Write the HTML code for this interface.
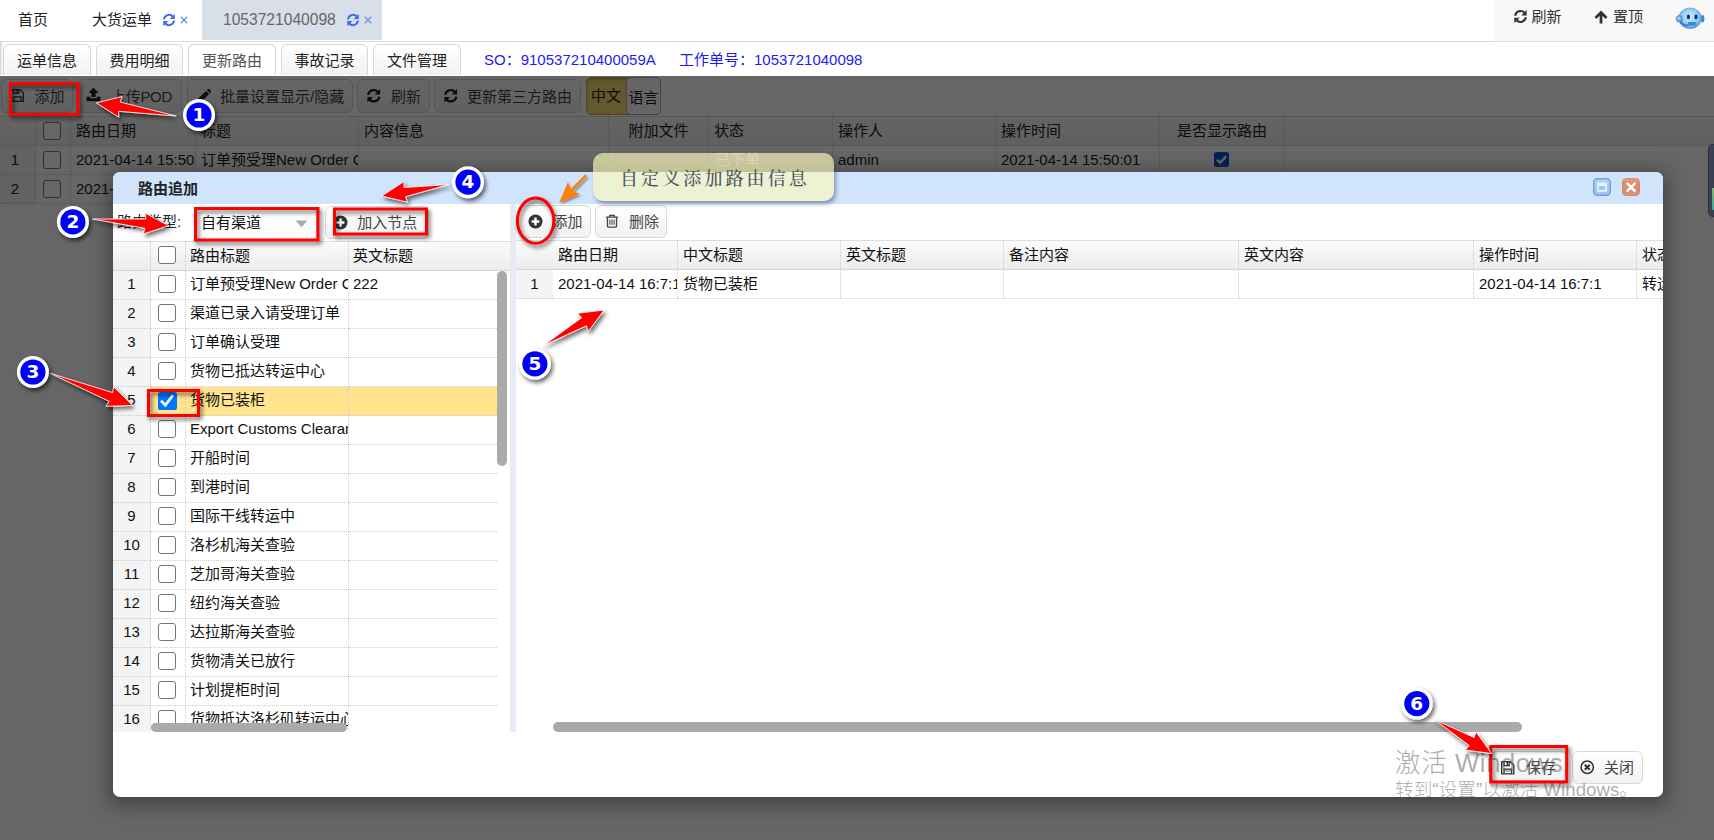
<!DOCTYPE html>
<html lang="zh-CN">
<head>
<meta charset="utf-8">
<title>路由追加</title>
<style>
*{box-sizing:border-box;margin:0;padding:0}
html,body{width:1714px;height:840px;overflow:hidden;background:#fff}
body{position:relative;font-family:"Liberation Sans","Noto Sans CJK SC",sans-serif;font-size:15px;color:#222;line-height:1}
.abs{position:absolute}
.t{position:absolute;white-space:nowrap;line-height:20px;height:20px}
/* top bar */
#topbar{left:0;top:0;width:1714px;height:42px;background:#fff;border-bottom:1px solid #dcdcdc}
#tabact{left:202px;top:0;width:180px;height:40px;background:#d9dfe8}
#topright{left:1495px;top:0;width:219px;height:41px;background:#f8f8f8}
/* sub tabs */
.stab{position:absolute;top:44px;height:31px;border:1px solid #d8d8d8;border-bottom:none;border-radius:6px 6px 0 0;background:linear-gradient(#fff,#f1f1f1);text-align:center;line-height:31px;font-size:15px;color:#222}
.stab.sel{background:#fff;color:#555}
/* underlying page */
#under{left:0;top:75px;width:1714px;height:765px;background:#fff}
.ubtn{position:absolute;top:4px;height:34px;border:1px solid #d4d4d4;border-radius:6px;background:linear-gradient(#fff,#f0f0f0);font-size:15px;line-height:34px;color:#444;white-space:nowrap}
.uh{position:absolute;top:41px;height:30px;line-height:29px;font-size:15px;border-right:1px dotted #ccc;padding-left:5px;white-space:nowrap;overflow:hidden}
.uc{position:absolute;height:29px;line-height:28px;font-size:15px;border-right:1px dotted #ccc;border-bottom:1px dotted #ccc;padding-left:5px;white-space:nowrap;overflow:hidden}
.cb{position:absolute;width:18px;height:18px;border:1px solid #767676;border-radius:3px;background:#fff}
#mask{left:0;top:76px;width:1714px;height:764px;background:rgba(0,0,0,.6)}
/* window */
#win{left:113px;top:172px;width:1550px;height:625px;background:#fff;border-radius:7px;box-shadow:0 4px 19px 4px rgba(0,0,0,.36);overflow:hidden}
#wtitle{left:0;top:0;width:1550px;height:32px;background:#d0e4fc}
.gh{position:absolute;height:30px;line-height:29px;font-size:15px;border-right:1px dotted #ccc;padding-left:5px;white-space:nowrap;overflow:hidden;color:#111}
.gc{position:absolute;height:29px;line-height:26px;font-size:15px;border-right:1px dotted #ccc;border-bottom:1px dotted #ccc;padding-left:5px;white-space:nowrap;overflow:hidden;color:#111}
.rg{line-height:28px}
.lg{padding-left:4px}
.rn{background:#f4f4f4;text-align:center;padding-left:0}
.wbtn{position:absolute;height:33px;border:1px solid #d8d8d8;border-radius:6px;background:linear-gradient(#fff,#f1f1f1);font-size:15px;line-height:31px;color:#444;white-space:nowrap}
</style>
</head>
<body>
<!-- TOPBAR -->
<div class="abs" id="topbar"></div>
<div class="abs" id="tabact"></div>
<div class="abs" id="topright"></div>
<div class="t" style="left:18px;top:10px;font-size:15px;color:#222">首页</div>
<div class="t" style="left:92px;top:10px;font-size:15px;color:#222">大货运单</div>
<div class="t" style="left:223px;top:10px;font-size:15.6px;color:#666">1053721040098</div>
<div class="t" style="left:1531.5px;top:7px;font-size:15px;color:#333">刷新</div>
<div class="t" style="left:1613px;top:7px;font-size:15px;color:#333">置顶</div>
<!--ICTOP-S--><svg class="abs" style="left:162px;top:13px" width="14" height="14" viewBox="0 0 16 16" ><g fill="none" stroke="#3a6af0" stroke-width="2.3"><path d="M2.3 7.2A5.8 5.8 0 0 1 12.3 4"/><path d="M13.7 8.8A5.8 5.8 0 0 1 3.7 12"/></g><path d="M14.6 1v5.8H8.8z" fill="#3a6af0"/><path d="M1.4 15V9.2h5.8z" fill="#3a6af0"/></svg>
<svg class="abs" style="left:180px;top:15.5px" width="8" height="8" viewBox="0 0 10 10" ><path d="M1 1l8 8M9 1l-8 8" stroke="#6b9ce8" stroke-width="1.8"/></svg>
<svg class="abs" style="left:346px;top:13px" width="14" height="14" viewBox="0 0 16 16" ><g fill="none" stroke="#3a6af0" stroke-width="2.3"><path d="M2.3 7.2A5.8 5.8 0 0 1 12.3 4"/><path d="M13.7 8.8A5.8 5.8 0 0 1 3.7 12"/></g><path d="M14.6 1v5.8H8.8z" fill="#3a6af0"/><path d="M1.4 15V9.2h5.8z" fill="#3a6af0"/></svg>
<svg class="abs" style="left:363.5px;top:15.5px" width="8" height="8" viewBox="0 0 10 10" ><path d="M1 1l8 8M9 1l-8 8" stroke="#6b9ce8" stroke-width="1.8"/></svg>
<svg class="abs" style="left:1512.5px;top:9px" width="15" height="15" viewBox="0 0 16 16" ><g fill="none" stroke="#333" stroke-width="2.3"><path d="M2.3 7.2A5.8 5.8 0 0 1 12.3 4"/><path d="M13.7 8.8A5.8 5.8 0 0 1 3.7 12"/></g><path d="M14.6 1v5.8H8.8z" fill="#333"/><path d="M1.4 15V9.2h5.8z" fill="#333"/></svg>
<svg class="abs" style="left:1594px;top:9.5px" width="14" height="14" viewBox="0 0 16 16" ><path d="M8 .6L.6 8 2.8 10.2 6.4 6.6V15.4H9.6V6.6L13.2 10.2 15.4 8z" fill="#333"/></svg>
<svg class="abs" style="left:1675px;top:7px" width="30" height="23" viewBox="0 0 30 23" ><defs><radialGradient id="av" cx=".5" cy=".42" r=".62"><stop offset="0" stop-color="#d0f1f8"/><stop offset=".55" stop-color="#8fd0ee"/><stop offset="1" stop-color="#3f8fdc"/></radialGradient><radialGradient id="av2" cx=".45" cy=".4" r=".7"><stop offset="0" stop-color="#a8dcf4"/><stop offset="1" stop-color="#3a80d4"/></radialGradient></defs><ellipse cx="27.6" cy="11.8" rx="1.8" ry="3.8" fill="#3f86d6"/><ellipse cx="15.1" cy="11.3" rx="11.4" ry="10.4" fill="url(#av)" stroke="#4a7fd0" stroke-width=".5"/><circle cx="4.2" cy="11.8" r="3.2" fill="url(#av2)" stroke="#3f74cc" stroke-width=".5"/><ellipse cx="13.4" cy="9.9" rx="1.6" ry="2.3" fill="#1d1fa0"/><ellipse cx="21" cy="9.9" rx="1.6" ry="2.3" fill="#1d1fa0"/><path d="M5.2 14.6Q8 18.6 13.4 18.4" fill="none" stroke="#2f62c0" stroke-width="1.3"/><rect x="13.1" y="14.9" width="7.6" height="3.7" rx=".8" fill="#3a86cf"/></svg><!--ICTOP-E-->
<!-- SUBTABS -->
<div class="abs" style="left:0;top:75px;width:1714px;height:1px;background:#dcdcdc"></div>
<div class="abs" style="left:0;top:42px;width:3px;height:33px;background:linear-gradient(to right,#d4d4d4,#fff)"></div>
<div class="stab" style="left:3px;width:88px">运单信息</div>
<div class="stab" style="left:96px;width:87px">费用明细</div>
<div class="stab sel" style="left:188px;width:88px">更新路由</div>
<div class="stab" style="left:281px;width:87px">事故记录</div>
<div class="stab" style="left:373px;width:88px">文件管理</div>
<div class="t" style="left:484px;top:50px;color:#1c1cf0">SO：910537210400059A</div>
<div class="t" style="left:679px;top:50px;color:#1c1cf0">工作单号：1053721040098</div>
<!-- UNDER -->
<div class="abs" id="under">
  <!-- toolbar buttons -->
  <div class="ubtn" style="left:1px;width:72px"><span class="abs" style="left:32.5px">添加</span></div>
  <div class="ubtn" style="left:78px;width:104px"><span class="abs" style="left:32px;letter-spacing:-.3px">上传POD</span></div>
  <div class="ubtn" style="left:187px;width:166px"><span class="abs" style="left:32px">批量设置显示/隐藏</span></div>
  <div class="ubtn" style="left:357px;width:73px"><span class="abs" style="left:33px">刷新</span></div>
  <div class="ubtn" style="left:434px;width:147px"><span class="abs" style="left:32px">更新第三方路由</span></div>
  <div class="abs" style="left:586px;top:2px;width:75px;height:38px;border-radius:5px;background:#ffdc70;border:1px solid #c8aa50;box-shadow:inset 0 2px 2px rgba(0,0,0,.22)"></div>
  <div class="abs" style="left:626px;top:2px;width:35px;height:38px;border-radius:5px;background:#fcfcfc;border:1px solid #aaa"></div>
  <div class="t" style="left:591px;top:11px;color:#222">中文</div>
  <div class="t" style="left:628.5px;top:13px;color:#222">语言</div>
<!--ICUND-S--><svg class="abs" style="left:11px;top:14px" width="13" height="13" viewBox="0 0 16 16" ><path d="M.8 .8h10.2l4.2 4.2v10.2H.8z" fill="none" stroke="#333" stroke-width="1.6" stroke-linejoin="round"/><path d="M3.6 1v4.4h6.2V1" fill="none" stroke="#333" stroke-width="1.5"/><rect x="6.6" y="1.2" width="2" height="3.4" fill="#333"/><path d="M3.6 15V9.6h8.8V15" fill="none" stroke="#333" stroke-width="1.5"/></svg>
<svg class="abs" style="left:86px;top:12.3px" width="15" height="15" viewBox="0 0 16 16" ><path d="M8 .6L13.4 6.4H10.3V10.6H5.7V6.4H2.6z" fill="#222"/><path d="M.6 10.4H4.6V12H11.4V10.4H15.4V15.2H.6z" fill="#222"/></svg>
<svg class="abs" style="left:195.5px;top:13.5px" width="15" height="15" viewBox="0 0 16 16" ><path d="M1 15l.9-4.3L10.6 2l3.4 3.4-8.7 8.7z" fill="#222"/><path d="M11.6 1l1-1a1 1 0 0 1 1.4 0l2 2a1 1 0 0 1 0 1.4l-1 1z" fill="#222"/></svg>
<svg class="abs" style="left:366px;top:12.5px" width="15.5" height="15.5" viewBox="0 0 16 16" ><g fill="none" stroke="#222" stroke-width="2.3"><path d="M2.3 7.2A5.8 5.8 0 0 1 12.3 4"/><path d="M13.7 8.8A5.8 5.8 0 0 1 3.7 12"/></g><path d="M14.6 1v5.8H8.8z" fill="#222"/><path d="M1.4 15V9.2h5.8z" fill="#222"/></svg>
<svg class="abs" style="left:442.5px;top:12.5px" width="15.5" height="15.5" viewBox="0 0 16 16" ><g fill="none" stroke="#222" stroke-width="2.3"><path d="M2.3 7.2A5.8 5.8 0 0 1 12.3 4"/><path d="M13.7 8.8A5.8 5.8 0 0 1 3.7 12"/></g><path d="M14.6 1v5.8H8.8z" fill="#222"/><path d="M1.4 15V9.2h5.8z" fill="#222"/></svg><!--ICUND-E-->
  <!-- grid header -->
  <div class="abs" style="left:0;top:41px;width:1714px;height:30px;background:linear-gradient(#fafafa,#efefef);border-top:1px solid #ddd;border-bottom:1px solid #ddd"></div>
  <div class="uh" style="left:0;width:36px"></div>
  <div class="uh" style="left:36px;width:35px"></div>
  <div class="uh" style="left:71px;width:125px">路由日期</div>
  <div class="uh" style="left:196px;width:163px">标题</div>
  <div class="uh" style="left:359px;width:250px">内容信息</div>
  <div class="uh" style="left:609px;width:100px;text-align:center;padding-left:0">附加文件</div>
  <div class="uh" style="left:709px;width:124px">状态</div>
  <div class="uh" style="left:833px;width:163px">操作人</div>
  <div class="uh" style="left:996px;width:164px">操作时间</div>
  <div class="uh" style="left:1160px;width:125px;text-align:center;padding-left:0">是否显示路由</div>
  <div class="cb" style="left:43px;top:47px"></div>
  <!-- row 1 -->
  <div class="uc rn" style="left:0;top:71px;width:36px;padding-right:5px">1</div>
  <div class="uc" style="left:36px;top:71px;width:35px"></div>
  <div class="uc" style="left:71px;top:71px;width:125px">2021-04-14 15:50:01</div>
  <div class="uc" style="left:196px;top:71px;width:163px">订单预受理New Order Create</div>
  <div class="uc" style="left:359px;top:71px;width:250px"></div>
  <div class="uc" style="left:609px;top:71px;width:100px"></div>
  <div class="uc" style="left:709px;top:71px;width:124px"></div>
  <div class="uc" style="left:833px;top:71px;width:163px">admin</div>
  <div class="uc" style="left:996px;top:71px;width:164px">2021-04-14 15:50:01</div>
  <div class="uc" style="left:1160px;top:71px;width:125px"></div>
  <div class="cb" style="left:43px;top:76px"></div>
  <svg class="abs" style="left:1214px;top:77px" width="15" height="15" viewBox="0 0 15 15"><rect x="0" y="0" width="15" height="15" rx="2.5" fill="#0b57cf"/><path d="M3 7.6l3.2 3.2 5.8-6.4" fill="none" stroke="#fff" stroke-width="2.4"/></svg>
  <!-- row 2 -->
  <div class="uc rn" style="left:0;top:100px;width:36px;padding-right:5px">2</div>
  <div class="uc" style="left:36px;top:100px;width:35px"></div>
  <div class="uc" style="left:71px;top:100px;width:125px">2021-04-14 15:50:01</div>
  <div class="uc" style="left:196px;top:100px;width:1089px"></div>
  <div class="cb" style="left:43px;top:105px"></div>
</div>
<div class="abs" id="mask"></div>
<div class="t" style="left:715px;top:150px;color:rgba(255,255,255,.36)">已下单</div>
<!-- WINDOW -->
<div class="abs" id="win">
  <div class="abs" id="wtitle"></div>
  <div class="t" style="left:25px;top:7px;font-weight:bold;color:#222">路由追加</div>
  <!-- LEFT PANEL -->
  <div class="abs" id="lp" style="left:0;top:32px;width:397px;height:528px;overflow:hidden">
    <div class="t" style="left:4px;top:8px;color:#222">路由类型:</div>
    <div class="abs" style="left:83px;top:4px;width:121px;height:32px;border:1px solid #ccc;border-radius:5px;background:#fff"></div>
    <div class="t" style="left:88px;top:9px;color:#111">自有渠道</div>
    <svg class="abs" style="left:182px;top:16px" width="13" height="8" viewBox="0 0 13 8"><path d="M0.5 0.5h12L6.5 7.2z" fill="#aaa"/></svg>
    <div class="wbtn" style="left:212px;top:2px;width:104px"><span class="abs" style="left:31.3px">加入节点</span></div>
    <svg class="abs" style="left:220px;top:11px" width="15" height="15" viewBox="0 0 15 15"><circle cx="7.5" cy="7.5" r="7" fill="#333"/><path d="M7.5 3.6v7.8M3.6 7.5h7.8" stroke="#fff" stroke-width="2.4"/></svg>
    <!-- header -->
    <div class="abs" style="left:0;top:37px;width:397px;height:30px;background:linear-gradient(#fbfbfb,#ececec);border-top:1px solid #ddd;border-bottom:1px solid #d6d6d6"></div>
    <div class="gh lg" style="left:0;top:37px;width:38px"></div>
    <div class="gh lg" style="left:38px;top:37px;width:35px"></div>
    <div class="gh lg" style="left:73px;top:37px;width:163px">路由标题</div>
    <div class="gh lg" style="left:236px;top:37px;width:161px;border-right:none">英文标题</div>
    <div class="cb" style="left:45px;top:42px"></div>
    <div class="gc rn" style="left:0;top:67px;width:38px">1</div>
    <div class="gc lg" style="left:38px;top:67px;width:35px"></div>
    <div class="gc lg" style="left:73px;top:67px;width:163px">订单预受理New Order Create</div>
    <div class="gc lg" style="left:236px;top:67px;width:148px;border-right:none">222</div>
    <div class="cb" style="left:45px;top:71px"></div>
    <div class="gc rn" style="left:0;top:96px;width:38px">2</div>
    <div class="gc lg" style="left:38px;top:96px;width:35px"></div>
    <div class="gc lg" style="left:73px;top:96px;width:163px">渠道已录入请受理订单</div>
    <div class="gc lg" style="left:236px;top:96px;width:148px;border-right:none"></div>
    <div class="cb" style="left:45px;top:100px"></div>
    <div class="gc rn" style="left:0;top:125px;width:38px">3</div>
    <div class="gc lg" style="left:38px;top:125px;width:35px"></div>
    <div class="gc lg" style="left:73px;top:125px;width:163px">订单确认受理</div>
    <div class="gc lg" style="left:236px;top:125px;width:148px;border-right:none"></div>
    <div class="cb" style="left:45px;top:129px"></div>
    <div class="gc rn" style="left:0;top:154px;width:38px">4</div>
    <div class="gc lg" style="left:38px;top:154px;width:35px"></div>
    <div class="gc lg" style="left:73px;top:154px;width:163px">货物已抵达转运中心</div>
    <div class="gc lg" style="left:236px;top:154px;width:148px;border-right:none"></div>
    <div class="cb" style="left:45px;top:158px"></div>
    <div class="gc rn" style="left:0;top:183px;width:38px">5</div>
    <div class="gc lg" style="left:38px;top:183px;width:35px;background:#ffe48d"></div>
    <div class="gc lg" style="left:73px;top:183px;width:163px;background:#ffe48d">货物已装柜</div>
    <div class="gc lg" style="left:236px;top:183px;width:148px;border-right:none;background:#ffe48d"></div>
    <svg class="abs" style="left:45px;top:188px" width="19" height="18" viewBox="0 0 19 18"><rect width="19" height="18" rx="2.6" fill="#0075ff"/><path d="M3 8.8l4.4 4.3L14.9 3.2" fill="none" stroke="#fff" stroke-width="2.7"/></svg>
    <div class="gc rn" style="left:0;top:212px;width:38px">6</div>
    <div class="gc lg" style="left:38px;top:212px;width:35px"></div>
    <div class="gc lg" style="left:73px;top:212px;width:163px">Export Customs Clearance</div>
    <div class="gc lg" style="left:236px;top:212px;width:148px;border-right:none"></div>
    <div class="cb" style="left:45px;top:216px"></div>
    <div class="gc rn" style="left:0;top:241px;width:38px">7</div>
    <div class="gc lg" style="left:38px;top:241px;width:35px"></div>
    <div class="gc lg" style="left:73px;top:241px;width:163px">开船时间</div>
    <div class="gc lg" style="left:236px;top:241px;width:148px;border-right:none"></div>
    <div class="cb" style="left:45px;top:245px"></div>
    <div class="gc rn" style="left:0;top:270px;width:38px">8</div>
    <div class="gc lg" style="left:38px;top:270px;width:35px"></div>
    <div class="gc lg" style="left:73px;top:270px;width:163px">到港时间</div>
    <div class="gc lg" style="left:236px;top:270px;width:148px;border-right:none"></div>
    <div class="cb" style="left:45px;top:274px"></div>
    <div class="gc rn" style="left:0;top:299px;width:38px">9</div>
    <div class="gc lg" style="left:38px;top:299px;width:35px"></div>
    <div class="gc lg" style="left:73px;top:299px;width:163px">国际干线转运中</div>
    <div class="gc lg" style="left:236px;top:299px;width:148px;border-right:none"></div>
    <div class="cb" style="left:45px;top:303px"></div>
    <div class="gc rn" style="left:0;top:328px;width:38px">10</div>
    <div class="gc lg" style="left:38px;top:328px;width:35px"></div>
    <div class="gc lg" style="left:73px;top:328px;width:163px">洛杉机海关查验</div>
    <div class="gc lg" style="left:236px;top:328px;width:148px;border-right:none"></div>
    <div class="cb" style="left:45px;top:332px"></div>
    <div class="gc rn" style="left:0;top:357px;width:38px">11</div>
    <div class="gc lg" style="left:38px;top:357px;width:35px"></div>
    <div class="gc lg" style="left:73px;top:357px;width:163px">芝加哥海关查验</div>
    <div class="gc lg" style="left:236px;top:357px;width:148px;border-right:none"></div>
    <div class="cb" style="left:45px;top:361px"></div>
    <div class="gc rn" style="left:0;top:386px;width:38px">12</div>
    <div class="gc lg" style="left:38px;top:386px;width:35px"></div>
    <div class="gc lg" style="left:73px;top:386px;width:163px">纽约海关查验</div>
    <div class="gc lg" style="left:236px;top:386px;width:148px;border-right:none"></div>
    <div class="cb" style="left:45px;top:390px"></div>
    <div class="gc rn" style="left:0;top:415px;width:38px">13</div>
    <div class="gc lg" style="left:38px;top:415px;width:35px"></div>
    <div class="gc lg" style="left:73px;top:415px;width:163px">达拉斯海关查验</div>
    <div class="gc lg" style="left:236px;top:415px;width:148px;border-right:none"></div>
    <div class="cb" style="left:45px;top:419px"></div>
    <div class="gc rn" style="left:0;top:444px;width:38px">14</div>
    <div class="gc lg" style="left:38px;top:444px;width:35px"></div>
    <div class="gc lg" style="left:73px;top:444px;width:163px">货物清关已放行</div>
    <div class="gc lg" style="left:236px;top:444px;width:148px;border-right:none"></div>
    <div class="cb" style="left:45px;top:448px"></div>
    <div class="gc rn" style="left:0;top:473px;width:38px">15</div>
    <div class="gc lg" style="left:38px;top:473px;width:35px"></div>
    <div class="gc lg" style="left:73px;top:473px;width:163px">计划提柜时间</div>
    <div class="gc lg" style="left:236px;top:473px;width:148px;border-right:none"></div>
    <div class="cb" style="left:45px;top:477px"></div>
    <div class="gc rn" style="left:0;top:502px;width:38px">16</div>
    <div class="gc lg" style="left:38px;top:502px;width:35px"></div>
    <div class="gc lg" style="left:73px;top:502px;width:163px">货物抵达洛杉矶转运中心</div>
    <div class="gc lg" style="left:236px;top:502px;width:148px;border-right:none"></div>
    <div class="cb" style="left:45px;top:506px"></div>
    <div class="abs" style="left:384px;top:67px;width:13px;height:461px;background:#fff"></div>
    <div class="abs" style="left:384px;top:67px;width:10px;height:195px;background:#aaa;border-radius:5px"></div>
    <div class="abs" style="left:38px;top:519px;width:196px;height:9px;background:#aaa;border-radius:5px"></div>
  </div>
  <div class="abs" style="left:397px;top:32px;width:6px;height:528px;background:#e6ecf7"></div>
  <!-- RIGHT PANEL -->
  <div class="abs" id="rp" style="left:403px;top:32px;width:1147px;height:528px;overflow:hidden">
    <div class="wbtn" style="left:2px;top:1px;width:73px"><span class="abs" style="left:33.5px">添加</span></div>
    <svg class="abs" style="left:12px;top:10px" width="15" height="15" viewBox="0 0 15 15"><circle cx="7.5" cy="7.5" r="7" fill="#333"/><path d="M7.5 3.6v7.8M3.6 7.5h7.8" stroke="#fff" stroke-width="2.4"/></svg>
    <div class="wbtn" style="left:79px;top:1px;width:72px"><span class="abs" style="left:33px">删除</span></div>
    <div class="abs" style="left:0;top:36px;width:1147px;height:30px;background:linear-gradient(#fbfbfb,#ececec);border-top:1px solid #ddd;border-bottom:1px solid #d6d6d6"></div>
    <div class="gh" style="left:0;top:36px;width:37px;border-right:none"></div>
    <div class="gh" style="left:37px;top:36px;width:125px">路由日期</div>
    <div class="gh" style="left:162px;top:36px;width:163px">中文标题</div>
    <div class="gh" style="left:325px;top:36px;width:163px">英文标题</div>
    <div class="gh" style="left:488px;top:36px;width:235px">备注内容</div>
    <div class="gh" style="left:723px;top:36px;width:235px">英文内容</div>
    <div class="gh" style="left:958px;top:36px;width:163px">操作时间</div>
    <div class="gh" style="left:1121px;top:36px;width:60px;border-right:none">状态</div>
    <div class="gc rn rg" style="left:0;top:66px;width:37px;border-right:none">1</div>
    <div class="gc rg" style="left:37px;top:66px;width:125px">2021-04-14 16:7:11</div>
    <div class="gc rg" style="left:162px;top:66px;width:163px">货物已装柜</div>
    <div class="gc rg" style="left:325px;top:66px;width:163px"></div>
    <div class="gc rg" style="left:488px;top:66px;width:235px"></div>
    <div class="gc rg" style="left:723px;top:66px;width:235px"></div>
    <div class="gc rg" style="left:958px;top:66px;width:163px">2021-04-14 16:7:1</div>
    <div class="gc rg" style="left:1121px;top:66px;width:60px;border-right:none">转运中</div>
    <div class="abs" style="left:37px;top:518px;width:969px;height:10px;background:#aaa;border-radius:5px"></div>
  </div>
  <!-- title buttons -->
  <svg class="abs" style="left:1480px;top:6px" width="18" height="18" viewBox="0 0 18 18"><defs><linearGradient id="mb" x1="0" y1="0" x2="0" y2="1"><stop offset="0" stop-color="#b4d3fb"/><stop offset="1" stop-color="#a0c2f0"/></linearGradient></defs><rect x=".7" y=".7" width="16.6" height="16.6" rx="3.6" fill="url(#mb)" stroke="#6f9fdd" stroke-width="1.4"/><rect x="4.2" y="4.5" width="9.6" height="9.3" fill="#eaf1fd"/><rect x="6" y="8.1" width="6" height="3.8" fill="#9cc2f5"/></svg>
  <svg class="abs" style="left:1509px;top:6px" width="18" height="18" viewBox="0 0 18 18"><defs><linearGradient id="cb2" x1="0" y1="0" x2="0" y2="1"><stop offset="0" stop-color="#e7a57c"/><stop offset=".25" stop-color="#e28c6c"/><stop offset=".8" stop-color="#dc8a6e"/><stop offset="1" stop-color="#c9a07a"/></linearGradient></defs><rect x=".5" y=".5" width="17" height="17" rx="3.8" fill="url(#cb2)" stroke="#cc7a62" stroke-width=".8"/><path d="M5.5 5.6l7.2 7.2M12.7 5.6l-7.2 7.2" stroke="#fff" stroke-width="2.5" stroke-linecap="round"/></svg>
  <!-- bottom buttons -->
  <div class="wbtn" style="left:1378px;top:579px;width:76px"><span class="abs" style="left:34px">保存</span></div>
  <div class="wbtn" style="left:1459px;top:579px;width:71px"><span class="abs" style="left:31px">关闭</span></div>
  <!--ICWIN-S--><svg class="abs" style="left:491.5px;top:42px" width="14" height="14" viewBox="0 0 16 16" ><path d="M1 3.6h14" stroke="#444" stroke-width="1.5"/><path d="M5.4 3.4V1.6h5.2v1.8" fill="none" stroke="#444" stroke-width="1.4"/><path d="M2.8 4v9.6a1.4 1.4 0 0 0 1.4 1.4h7.6a1.4 1.4 0 0 0 1.4-1.4V4" fill="none" stroke="#444" stroke-width="1.5"/><path d="M5.6 6.4v6M8 6.4v6M10.4 6.4v6" stroke="#444" stroke-width="1.2"/></svg>
<svg class="abs" style="left:1388px;top:589px" width="13.5" height="13.5" viewBox="0 0 16 16" ><path d="M.8 .8h10.2l4.2 4.2v10.2H.8z" fill="none" stroke="#333" stroke-width="1.6" stroke-linejoin="round"/><path d="M3.6 1v4.4h6.2V1" fill="none" stroke="#333" stroke-width="1.5"/><rect x="6.6" y="1.2" width="2" height="3.4" fill="#333"/><path d="M3.6 15V9.6h8.8V15" fill="none" stroke="#333" stroke-width="1.5"/></svg>
<svg class="abs" style="left:1467px;top:588px" width="14.5" height="14.5" viewBox="0 0 16 16" ><circle cx="8" cy="8" r="6.8" fill="none" stroke="#333" stroke-width="1.7"/><path d="M5.3 5.3l5.4 5.4M10.7 5.3l-5.4 5.4" stroke="#333" stroke-width="2.3"/></svg><!--ICWIN-E-->
</div>
<!-- TOOLTIP / WATERMARK -->
<div class="abs" style="left:1708px;top:144px;width:8px;height:73px;background:#3a4054;border-radius:5px 0 0 5px;border:1px solid #2b3040"></div>
<div class="abs" style="left:1712px;top:188px;width:2px;height:22px;background:linear-gradient(#86b566,#3aa898)"></div>
<div class="abs" style="left:593px;top:153px;width:241px;height:48px;border-radius:10px;background:rgba(252,250,188,.66);box-shadow:2px 3px 4px rgba(40,50,90,.45)"></div>
<div class="t" style="left:620px;top:165px;height:24px;line-height:24px;font-family:'Noto Serif CJK SC','Liberation Serif',serif;font-size:18px;letter-spacing:3.1px;color:#4f5662;font-weight:500">自定义添加路由信息</div>
<div class="abs" style="left:113px;top:172px;width:1550px;height:625px;overflow:hidden;border-radius:7px">
  <div class="t" style="left:1282px;top:576px;height:30px;line-height:30px;font-size:25.6px;color:rgba(90,90,90,.5);letter-spacing:.6px;font-weight:300">激活 Windows</div>
  <div class="t" style="left:1282px;top:606px;height:24px;line-height:24px;font-size:18.7px;color:rgba(90,90,90,.5);font-weight:300">转到“设置”以激活 Windows。</div>
</div>
<!--ANNOT-START-->
<svg class="abs" style="left:0;top:0;pointer-events:none" width="1714" height="840" viewBox="0 0 1714 840">
<defs><filter id="sh" x="-30%" y="-30%" width="160%" height="160%"><feDropShadow dx="2" dy="2.8" stdDeviation="2.1" flood-color="#000" flood-opacity=".6"/></filter><filter id="sh2" x="-30%" y="-30%" width="160%" height="160%"><feDropShadow dx="1.5" dy="2" stdDeviation="1.2" flood-color="#000" flood-opacity=".4"/></filter></defs>
<rect x="10.5" y="83.5" width="67.2" height="31" fill="none" stroke="#ff0000" stroke-width="3" filter="url(#sh)"/>
<rect x="195.5" y="208.5" width="122.5" height="31.5" fill="none" stroke="#ff0000" stroke-width="3" filter="url(#sh)"/>
<rect x="334.5" y="209.0" width="92" height="25.0" fill="none" stroke="#ff0000" stroke-width="3" filter="url(#sh)"/>
<rect x="148.5" y="390.5" width="50" height="25" fill="none" stroke="#ff0000" stroke-width="3" filter="url(#sh)"/>
<rect x="1490.8" y="746.5" width="75.90000000000009" height="35.39999999999998" fill="none" stroke="#ff0000" stroke-width="3" filter="url(#sh)"/>
<ellipse cx="535.6" cy="220.7" rx="18.2" ry="22.6" fill="none" stroke="#ff0000" stroke-width="3" filter="url(#sh)"/>
<polygon points="176.2,116.0 120.1,102.0 122.2,96.5 96.3,102.9 118.8,117.2 118.5,111.3" fill="#ff0000" stroke="#fff" stroke-width="0.8" stroke-linejoin="round" filter="url(#sh)"/>
<polygon points="92.4,219.0 145.0,228.3 143.3,234.0 168.6,225.7 145.1,213.1 145.8,219.0" fill="#ff0000" stroke="#fff" stroke-width="0.8" stroke-linejoin="round" filter="url(#sh)"/>
<polygon points="49.9,373.2 109.2,401.3 106.0,406.3 132.6,405.4 113.6,386.7 112.6,392.6" fill="#ff0000" stroke="#fff" stroke-width="0.8" stroke-linejoin="round" filter="url(#sh)"/>
<polygon points="448.7,184.6 403.9,187.5 404.1,181.5 381.7,196.0 407.6,202.2 405.5,196.7" fill="#ff0000" stroke="#fff" stroke-width="0.8" stroke-linejoin="round" filter="url(#sh)"/>
<polygon points="543.5,345.4 586.4,325.8 588.3,331.4 604.2,310.0 577.7,313.3 581.7,317.7" fill="#ff0000" stroke="#fff" stroke-width="0.8" stroke-linejoin="round" filter="url(#sh)"/>
<polygon points="1434.3,719.4 1469.3,745.6 1465.3,750.0 1491.7,753.5 1476.0,732.0 1474.1,737.6" fill="#ff0000" stroke="#fff" stroke-width="0.8" stroke-linejoin="round" filter="url(#sh)"/>
<g filter="url(#sh2)"><path d="M585.3 176.1L566 196" stroke="#ff8000" stroke-width="2.8" stroke-linecap="round" fill="none"/><polygon points="559.2,202.8 568.0,181.9 571.2,190.6 579.6,193.8" fill="#ff8000"/></g>
<g filter="url(#sh)"><circle cx="199" cy="115" r="16" fill="#fff"/><circle cx="199" cy="115" r="12.6" fill="#0000f8"/></g><text x="199" y="121.2" text-anchor="middle" font-family="DejaVu Sans, Liberation Sans, sans-serif" font-weight="bold" font-size="18.5" fill="#fff">1</text>
<g filter="url(#sh)"><circle cx="72.9" cy="221.9" r="16" fill="#fff"/><circle cx="72.9" cy="221.9" r="12.6" fill="#0000f8"/></g><text x="72.9" y="228.1" text-anchor="middle" font-family="DejaVu Sans, Liberation Sans, sans-serif" font-weight="bold" font-size="18.5" fill="#fff">2</text>
<g filter="url(#sh)"><circle cx="32.9" cy="372" r="16" fill="#fff"/><circle cx="32.9" cy="372" r="12.6" fill="#0000f8"/></g><text x="32.9" y="378.2" text-anchor="middle" font-family="DejaVu Sans, Liberation Sans, sans-serif" font-weight="bold" font-size="18.5" fill="#fff">3</text>
<g filter="url(#sh)"><circle cx="468" cy="182.2" r="16" fill="#fff"/><circle cx="468" cy="182.2" r="12.6" fill="#0000f8"/></g><text x="468" y="188.39999999999998" text-anchor="middle" font-family="DejaVu Sans, Liberation Sans, sans-serif" font-weight="bold" font-size="18.5" fill="#fff">4</text>
<g filter="url(#sh)"><circle cx="534.9" cy="363.8" r="16" fill="#fff"/><circle cx="534.9" cy="363.8" r="12.6" fill="#0000f8"/></g><text x="534.9" y="370.0" text-anchor="middle" font-family="DejaVu Sans, Liberation Sans, sans-serif" font-weight="bold" font-size="18.5" fill="#fff">5</text>
<g filter="url(#sh)"><circle cx="1416.8" cy="703.6" r="16" fill="#fff"/><circle cx="1416.8" cy="703.6" r="12.6" fill="#0000f8"/></g><text x="1416.8" y="709.8000000000001" text-anchor="middle" font-family="DejaVu Sans, Liberation Sans, sans-serif" font-weight="bold" font-size="18.5" fill="#fff">6</text>
</svg>
<!--ANNOT-END-->
</body>
</html>
